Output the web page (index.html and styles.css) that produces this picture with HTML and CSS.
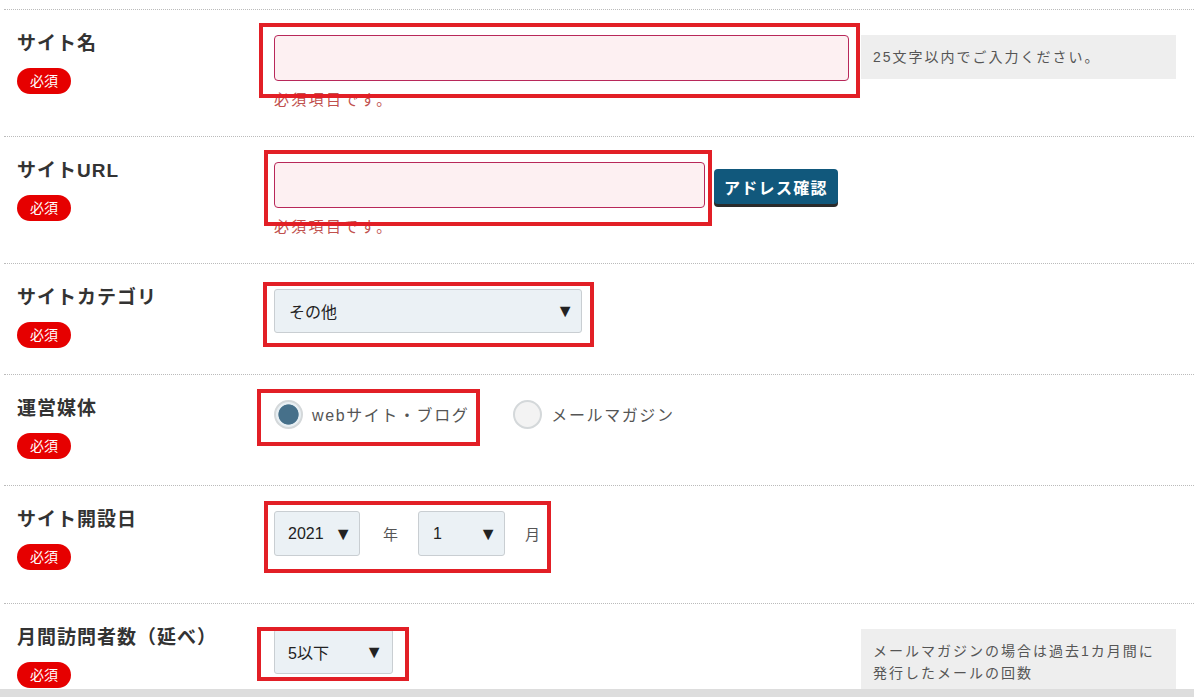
FILE: index.html
```html
<!DOCTYPE html>
<html lang="ja">
<head>
    <meta charset="UTF-8">
    <title>サイト登録</title>
    <link rel="stylesheet" href="styles.css">
</head>
<body>
    <div class="form">
        <div class="row">
            <div class="head">
                <p class="label">サイト名</p>
                <span class="req">必須</span>
            </div>
            <div class="field">
                <div class="mark mark-name">
                    <input class="text text-name" type="text">
                </div>
                <p class="err">必須項目です。</p>
            </div>
            <div class="note">25文字以内でご入力ください。</div>
        </div>

        <div class="row">
            <div class="head">
                <p class="label">サイトURL</p>
                <span class="req">必須</span>
            </div>
            <div class="field">
                <div class="inline">
                    <div class="mark mark-url">
                        <input class="text text-url" type="text">
                    </div>
                    <button class="btn" type="button">アドレス確認</button>
                </div>
                <p class="err">必須項目です。</p>
            </div>
        </div>

        <div class="row">
            <div class="head">
                <p class="label">サイトカテゴリ</p>
                <span class="req">必須</span>
            </div>
            <div class="field">
                <div class="mark mark-cat">
                    <div class="select select-cat"><span>その他</span><span class="arrow">▼</span></div>
                </div>
            </div>
        </div>

        <div class="row">
            <div class="head">
                <p class="label">運営媒体</p>
                <span class="req">必須</span>
            </div>
            <div class="field">
                <div class="radios">
                    <div class="mark mark-media">
                        <label class="radio"><span class="dot on"></span>webサイト・ブログ</label>
                    </div>
                    <label class="radio"><span class="dot"></span>メールマガジン</label>
                </div>
            </div>
        </div>

        <div class="row row-date">
            <div class="head">
                <p class="label">サイト開設日</p>
                <span class="req">必須</span>
            </div>
            <div class="field">
                <div class="mark mark-date">
                    <div class="date">
                        <div class="select select-year"><span>2021</span><span class="arrow">▼</span></div>
                        <span class="unit unit-y">年</span>
                        <div class="select select-month"><span>1</span><span class="arrow">▼</span></div>
                        <span class="unit unit-m">月</span>
                    </div>
                </div>
            </div>
        </div>

        <div class="row">
            <div class="head">
                <p class="label">月間訪問者数（延べ）</p>
                <span class="req">必須</span>
            </div>
            <div class="field">
                <div class="mark mark-visit">
                    <div class="select select-visit"><span>5以下</span><span class="arrow">▼</span></div>
                </div>
            </div>
            <div class="note">メールマガジンの場合は過去1カ月間に<br>発行したメールの回数</div>
        </div>
    </div>
    <div class="foot"></div>
</body>
</html>
```

FILE: styles.css
```css
*{
    margin:0;
    padding:0;
    box-sizing:border-box;
}
body{
    width:1194px;
    height:697px;
    overflow:hidden;
    background:#fff;
    font-family:"Liberation Sans","Noto Sans CJK JP",sans-serif;
    color:#333;
}
.form{
    margin:9px 0 0 4px;
    width:1190px;
    height:680px;
    overflow:hidden;
}
.row{
    display:grid;
    grid-template-columns:257px 587px 315px;
    align-items:start;
    padding:22px 18px 26px 13px;
    border-top:1px dotted #bbb;
}
.row-date{
    padding-bottom:33px;
}
.head{
    display:flex;
    flex-direction:column;
    align-items:flex-start;
}
.label{
    font-size:19px;
    line-height:24px;
    font-weight:bold;
    letter-spacing:1px;
    color:#333;
}
.req{
    margin-top:12px;
    width:54px;
    height:26px;
    border-radius:13px;
    background:#e60000;
    color:#fff;
    font-size:14px;
    line-height:26px;
    text-align:center;
}
.field{
    padding-top:3px;
}
.mark{
    position:relative;
    display:inline-flex;
}
.mark::after{
    content:"";
    position:absolute;
    border:4px solid #e21f26;
    pointer-events:none;
}
.mark-name::after{ top:-12px; left:-15px; right:-11px; bottom:-17px; }
.mark-url::after{ top:-12px; left:-10px; right:-7px; bottom:-18px; }
.mark-cat::after{ top:-7px; left:-11px; right:-12px; bottom:-14px; }
.mark-media::after{ top:-11px; left:-17px; right:-11px; bottom:-18px; }
.mark-date::after{ top:-10px; left:-10px; right:-11px; bottom:-17px; }
.mark-visit::after{ top:-2px; left:-17px; right:-16px; bottom:-7px; }

.text{
    display:block;
    height:46px;
    border:1px solid #b8285a;
    border-radius:4px;
    background:#fdf0f2;
    outline:none;
}
.text-name{ width:575px; }
.text-url{ width:431px; }
.err{
    margin-top:9px;
    font-size:15px;
    line-height:20px;
    letter-spacing:2.3px;
    color:#c0504d;
}
.inline{
    display:flex;
    align-items:flex-start;
}
.btn{
    margin:7px 0 0 9px;
    height:35px;
    padding:0 10px;
    border:none;
    border-radius:4px;
    background:#11587c;
    box-shadow:0 3px 0 #2b2b2b;
    color:#fff;
    font-family:inherit;
    font-size:16px;
    font-weight:bold;
    letter-spacing:1.3px;
}
.select{
    display:flex;
    align-items:center;
    justify-content:space-between;
    height:45px;
    padding:0 7px 0 13px;
    border:1px solid #c9ced2;
    border-radius:3px;
    background:#ebf1f5;
    font-size:16px;
    color:#222;
}
.select-cat{ width:308px; height:44px; padding-left:14px; }
.select-year{ width:86px; }
.select-month{ width:87px; padding-left:14px; }
.select-visit{ width:119px; padding-right:9px; }
.arrow{
    font-size:18px;
    line-height:1;
    color:#222;
}
.radios{
    display:flex;
    align-items:center;
    gap:44px;
}
.radio{
    display:inline-flex;
    align-items:center;
    gap:9px;
    height:28px;
    font-size:16px;
    letter-spacing:1.6px;
    color:#555;
}
.dot{
    width:29px;
    height:29px;
    border-radius:50%;
    border:2px solid #d4d8da;
    background:#f3f3f3;
}
.dot.on{
    background:radial-gradient(circle closest-side,#46708a 78%,#e8eff3 84%);
}
.date{
    display:flex;
    align-items:center;
}
.unit{
    font-size:15px;
    color:#555;
}
.unit-y{ margin:0 20px 0 23px; }
.unit-m{ margin-left:20px; }
.note{
    margin-top:3px;
    padding:11px 12px;
    background:#eee;
    font-size:14px;
    line-height:22px;
    letter-spacing:2px;
    color:#555;
}
.foot{
    height:8px;
    background:#ddd;
}
```
